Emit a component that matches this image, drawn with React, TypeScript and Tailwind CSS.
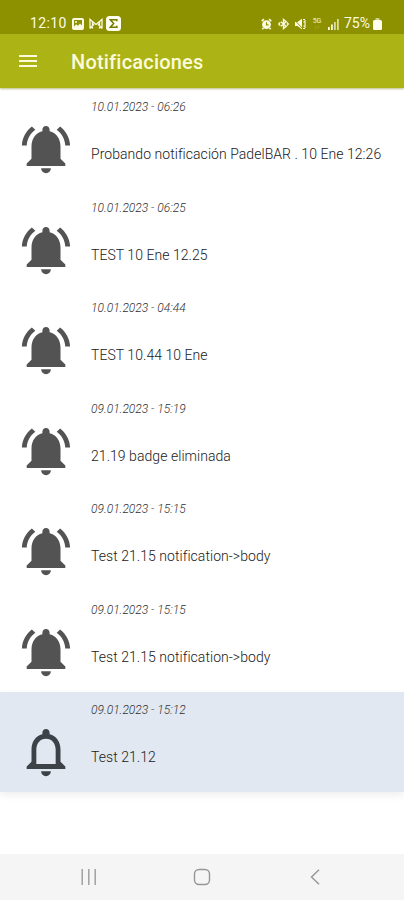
import clsx from "clsx";

const NOTIFICATIONS = [
  { id: 1, date: "10.01.2023 - 06:26", text: "Probando notificación PadelBAR . 10 Ene 12:26", unread: true },
  { id: 2, date: "10.01.2023 - 06:25", text: "TEST 10 Ene 12.25", unread: true },
  { id: 3, date: "10.01.2023 - 04:44", text: "TEST 10.44 10 Ene", unread: true },
  { id: 4, date: "09.01.2023 - 15:19", text: "21.19 badge eliminada", unread: true },
  { id: 5, date: "09.01.2023 - 15:15", text: "Test 21.15 notification->body", unread: true },
  { id: 6, date: "09.01.2023 - 15:15", text: "Test 21.15 notification->body", unread: true },
  { id: 7, date: "09.01.2023 - 15:12", text: "Test 21.12", unread: false },
];

function BellActive() {
  return (
    <svg viewBox="0 0 24 24" className="size-[58px]" fill="#535353">
      <path d="M7.58 4.08 6.15 2.65C3.75 4.48 2.17 7.3 2.03 10.5h2c.15-2.65 1.51-4.97 3.55-6.42zM19.97 10.5h2c-.15-3.2-1.73-6.02-4.12-7.85l-1.42 1.43c2.02 1.45 3.39 3.77 3.54 6.42zM18 11c0-3.07-1.64-5.64-4.5-6.32V4c0-.83-.67-1.5-1.5-1.5s-1.5.67-1.5 1.5v.68C7.63 5.36 6 7.92 6 11v5l-2 2v1h16v-1l-2-2v-5z" />
      <path d="M12 22c1.1 0 2-.9 2-2h-4c0 1.1.9 2 2 2z" />
    </svg>
  );
}

function BellOutline() {
  return (
    <svg viewBox="0 0 24 24" className="size-[58px]" fill="#3d4248">
      <path d="M12 22c1.1 0 2-.9 2-2h-4c0 1.1.9 2 2 2zm6-6v-5c0-3.07-1.64-5.64-4.5-6.32V4c0-.83-.67-1.5-1.5-1.5s-1.5.67-1.5 1.5v.68C7.63 5.36 6 7.92 6 11v5l-2 2v1h16v-1l-2-2zm-2 1H8v-6c0-2.48 1.51-4.5 4-4.5s4 2.02 4 4.5v6z" />
    </svg>
  );
}

function StatusBar() {
  return (
    <div className="flex h-[34px] items-end justify-between bg-[#8d9100] pr-[22px] pb-[3px] pl-[30px] text-[#fbfbe4]">
      <div className="flex h-[15px] items-center">
        <span className="w-[42px] text-[14px] leading-[15px] tracking-[0.4px]">12:10</span>
        {/* picture */}
        <svg viewBox="0 0 12 12" className="size-3">
          <rect width="12" height="12" rx="2" fill="currentColor" />
          <path d="M2 2h8v5.5L8 5.5 6 7.8 4.2 6.3 2 8.5z" fill="#8d9100" />
          <circle cx="4" cy="4" r="1" fill="currentColor" />
        </svg>
        {/* mail */}
        <svg viewBox="0 0 14 12" className="ml-[5px] h-3 w-[14px]" fill="none" stroke="currentColor" strokeWidth="1.3">
          <path d="M1 10.5v-9l6 5 6-5v9M1 10.5l4-4.5M13 10.5 9 6M3.5 3.5v7M10.5 3.5v7" />
        </svg>
        {/* sigma badge */}
        <svg viewBox="0 0 15 15" className="ml-[3px] size-[15px]">
          <rect width="15" height="15" rx="3.5" fill="#ffffef" />
          <path d="M10.8 5.2V3.7H4.4l3.2 3.8-3.2 3.8h6.4V9.8" fill="none" stroke="#757900" strokeWidth="1.6" />
        </svg>
      </div>
      <div className="flex h-[15px] items-center">
        {/* alarm */}
        <svg viewBox="0 0 12 12" className="h-3 w-[11px]">
          <circle cx="6" cy="6.6" r="4.8" fill="currentColor" />
          <path d="m.8 2.8 2.4-2M11.2 2.8 8.8.8M2.5 10.3l-1 1.3M9.5 10.3l1 1.3" stroke="currentColor" strokeWidth="1.8" />
          <path d="M6 4v3h2.2" fill="none" stroke="#8d9100" strokeWidth="1.2" />
        </svg>
        {/* bluetooth */}
        <svg viewBox="0 0 12 12" className="ml-[6px] h-3 w-[11px]" fill="none" stroke="currentColor" strokeWidth="1.5">
          <path d="m3 3.5 6 5L6 11V1l3 2.5-6 5" />
          <path d="M2.4 4.2.8 6l1.6 1.8M9.6 4.2 11.2 6 9.6 7.8" />
        </svg>
        {/* muted */}
        <svg viewBox="0 0 12 12" className="ml-[5px] size-3">
          <path d="M1 4h2.5L8 .8v10.4L3.5 8H1z" fill="currentColor" />
          <path d="M9 1.5h2M9.3 4H11M9.3 8H11M9 10.5h2M11 2v8" stroke="currentColor" strokeWidth="1.1" />
          <path d="m1 2.5 7 7.5" stroke="#8d9100" strokeWidth="0.9" />
        </svg>
        <div className="ml-[6px] flex h-3 w-[10px] flex-col items-center text-[7px] leading-[6px] font-medium opacity-80">
          <span>5G</span>
          <span className="text-[5px] opacity-50">↓↑</span>
        </div>
        {/* signal */}
        <svg viewBox="0 0 12 12" className="ml-[5px] size-3" fill="currentColor">
          <path d="M1 9h1.8v3H1zM4 6.5h1.8V12H4z" />
          <path d="M7 4h1.8v8H7zM10 1h1.8v11H10z" opacity=".7" />
        </svg>
        <span className="ml-[5px] w-[29px] text-[14px] leading-[15px]">75%</span>
        {/* battery */}
        <svg viewBox="0 0 9 12" className="h-3 w-[9px]">
          <path d="M2.5 0h4v2h-4z" fill="#fbfbe4" opacity=".6" />
          <rect y="2" width="9" height="10" rx="1.5" fill="#ffffef" />
        </svg>
      </div>
    </div>
  );
}

export default function App() {
  return (
    <div className="flex h-[900px] w-[404px] flex-col overflow-hidden bg-white font-['Roboto','Liberation_Sans',sans-serif]">
      <StatusBar />

      <header className="z-10 flex h-[54px] shrink-0 items-center bg-[#acb315] pl-[19px] text-[#fbfbdc] shadow-[0_1px_2px_rgba(120,125,20,0.5)]">
        <button className="flex w-[18px] flex-col gap-[3px]" aria-label="Menu">
          <span className="h-[2px] w-full bg-current" />
          <span className="h-[2px] w-full bg-current" />
          <span className="h-[2px] w-full bg-current" />
        </button>
        <h1 className="ml-[34px] pt-px text-[20px] font-medium tracking-[0.2px]">Notificaciones</h1>
      </header>

      <main className="flex-1 pt-[0.5px]">
        {NOTIFICATIONS.map((item) => (
          <div
            key={item.id}
            className={clsx(
              "flex h-[100.5px] pl-[17px]",
              !item.unread && "bg-[#e1e8f1] shadow-[0_3px_8px_rgba(0,0,0,0.07)]"
            )}
          >
            <div className="w-[74px] pt-[31.5px]">{item.unread ? <BellActive /> : <BellOutline />}</div>
            <div className="flex flex-col whitespace-nowrap">
              <time className="pt-[10.5px] text-[12px] leading-[16px] font-light text-[#303030] italic">{item.date}</time>
              <p className="mt-[29px] text-[14px] leading-[20px] font-light tracking-[0.05px] text-[#202020]">{item.text}</p>
            </div>
          </div>
        ))}
      </main>

      <nav className="flex h-[46px] shrink-0 items-center bg-[#f5f5f5] pl-[81px] text-[#969696]">
        <svg viewBox="0 0 16 16" className="size-4" stroke="currentColor" strokeWidth="1.3">
          <path d="M1.2 0v16M7.8 0v16M14.2 0v16" />
        </svg>
        <svg viewBox="0 0 18 18" className="ml-[96px] size-[18px]" fill="none" stroke="currentColor" strokeWidth="1.4">
          <rect x="1.5" y="1.5" width="15" height="15" rx="4.5" />
        </svg>
        <svg viewBox="0 0 10 16" className="ml-[99px] h-4 w-[10px]" fill="none" stroke="currentColor" strokeWidth="1.4">
          <path d="M9 .8 1.5 8 9 15.2" />
        </svg>
      </nav>
    </div>
  );
}
